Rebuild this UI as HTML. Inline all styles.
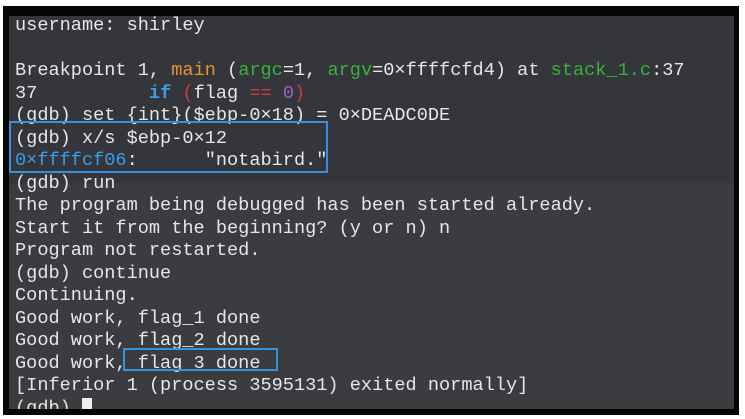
<!DOCTYPE html><html><head><style>
body{margin:0;width:745px;height:419px;background:#fff;position:relative;overflow:hidden}
.frame{position:absolute;left:3px;top:6px;width:736px;height:409px;background:#050505}
.in{position:absolute;left:9px;top:16px;width:725px;height:393px;background:#34363b;overflow:hidden}
.low{position:absolute;left:0;top:167px;width:100%;height:230px;background:#3a3c40}
pre{position:absolute;left:6px;top:-1px;margin:0;font-family:"Liberation Mono",monospace;font-size:18.6px;line-height:22.5px;color:#e6e6e6}
.o{color:#e8912c}.g{color:#3bb03b}.b{color:#3a9ee6}.r{color:#d13b3b}.p{color:#9b5fc8}
.box{position:absolute;border:2px solid #3a8fe0}
.cur{display:inline-block;width:10px;height:17px;background:#eee;vertical-align:-2px}
</style></head><body>
<div class="frame"></div>
<div class="in"><div class="low"></div>
<pre>username: shirley

Breakpoint 1, <span class="o">main</span> (<span class="g">argc</span>=1, <span class="g">argv</span>=0×ffffcfd4) at <span class="g">stack_1.c</span>:37
37          <span class="b"><b>if</b></span> <span class="r">(</span>flag <span class="r">==</span> <span class="p">0</span><span class="r">)</span>
(gdb) set {int}($ebp-0×18) = 0×DEADC0DE
(gdb) x/s $ebp-0×12
<span class="b">0×ffffcf06</span>:      "notabird."
(gdb) run
The program being debugged has been started already.
Start it from the beginning? (y or n) n
Program not restarted.
(gdb) continue
Continuing.
Good work, flag_1 done
Good work, flag_2 done
Good work, flag_3 done
[Inferior 1 (process 3595131) exited normally]
(gdb) <span class="cur"></span></pre></div>
<div class="box" style="left:9px;top:121px;width:315px;height:48px"></div>
<div class="box" style="left:123px;top:348px;width:151px;height:19px"></div>
</body></html>
